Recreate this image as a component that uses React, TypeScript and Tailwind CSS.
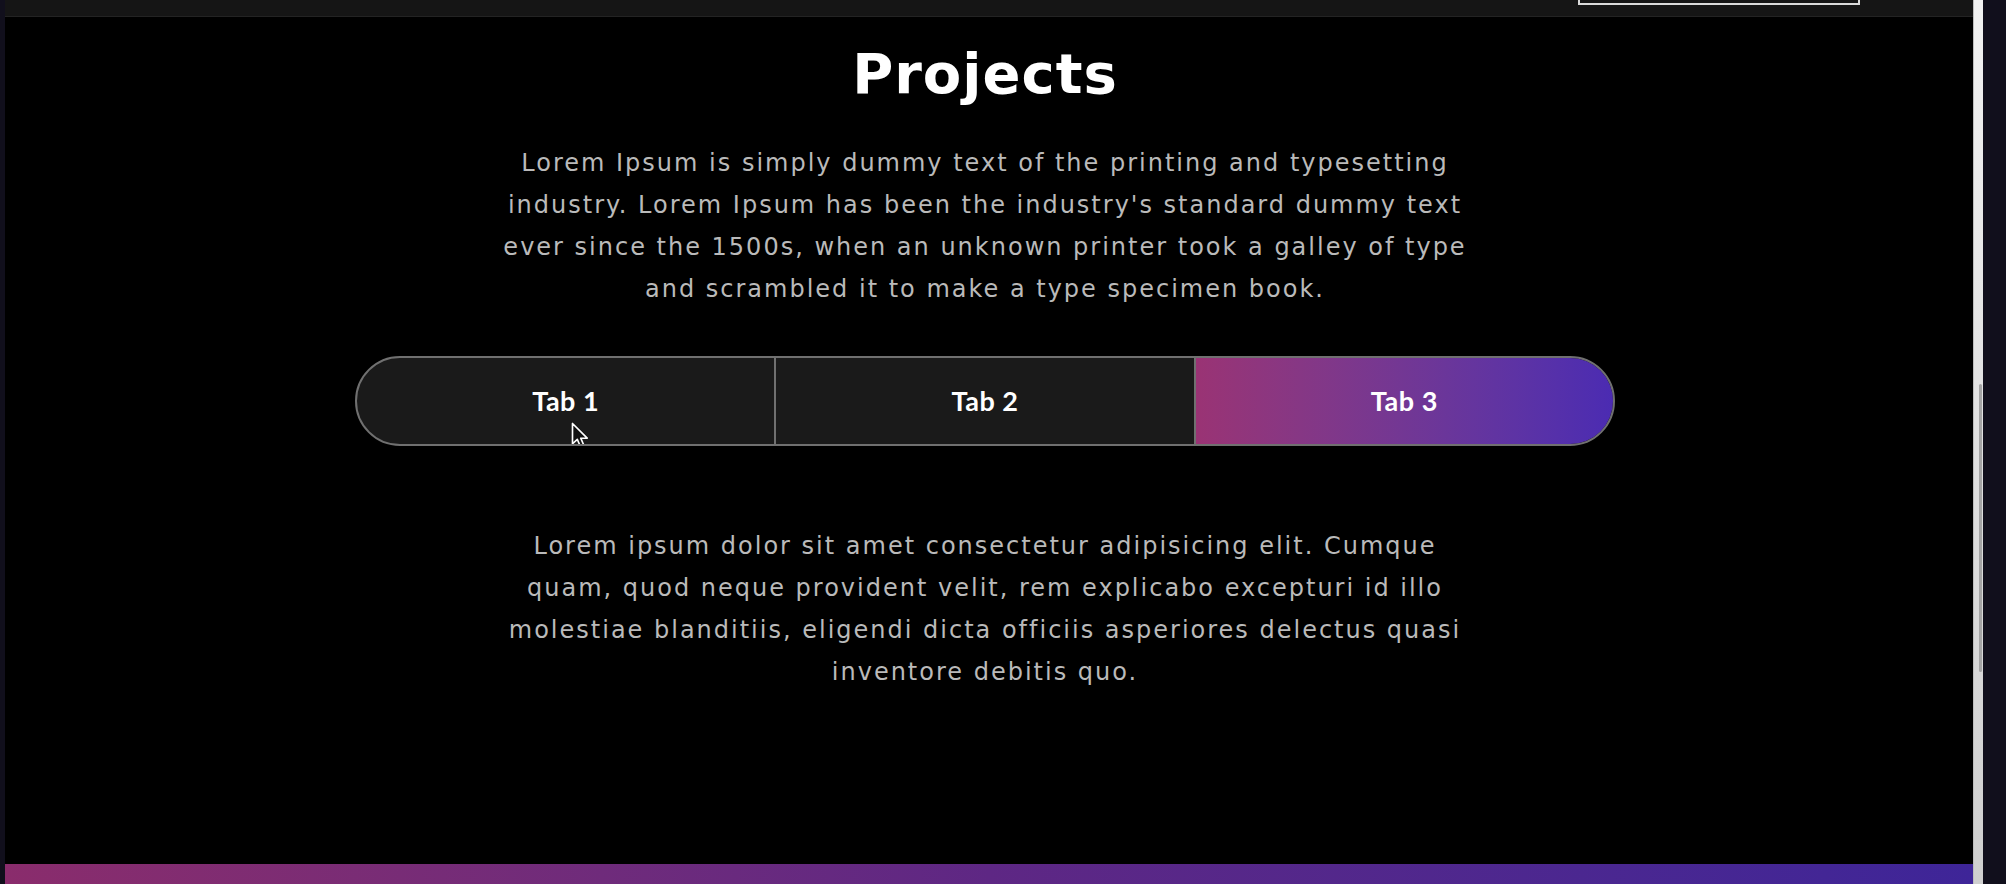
import React from 'react'

const intro = [
  'Lorem Ipsum is simply dummy text of the printing and typesetting',
  "industry. Lorem Ipsum has been the industry's standard dummy text",
  'ever since the 1500s, when an unknown printer took a galley of type',
  'and scrambled it to make a type specimen book.',
]

const body = [
  'Lorem ipsum dolor sit amet consectetur adipisicing elit. Cumque',
  'quam, quod neque provident velit, rem explicabo excepturi id illo',
  'molestiae blanditiis, eligendi dicta officiis asperiores delectus quasi',
  'inventore debitis quo.',
]

const tabs = ['Tab 1', 'Tab 2', 'Tab 3']

function Cursor() {
  return (
    <svg width="18" height="27" viewBox="0 0 12 18" className="absolute left-[214px] top-[64px]">
      <path
        d="M1 1 L1 14.5 L4.2 11.6 L6.4 16.6 L8.6 15.6 L6.5 10.8 L10.8 10.8 Z"
        fill="#111"
        stroke="#fff"
        strokeWidth="1.1"
        strokeLinejoin="round"
      />
    </svg>
  )
}

export default function App() {
  const active = 2

  return (
    <div className="flex w-[2006px] h-[884px] bg-[#110f1c] overflow-hidden" style={{ fontFamily: '"DejaVu Sans", sans-serif' }}>
      {/* left edge */}
      <div className="w-[5px] shrink-0" />

      {/* page */}
      <div className="flex flex-col w-[1968px] shrink-0 bg-black">
        {/* navbar tail */}
        <div className="flex justify-end h-[17px] bg-[#151515] border-b border-[#232323]">
          <div className="w-[282px] h-[5px] mr-[113px] border-x-2 border-b-2 border-[#d9d9d9]" />
        </div>

        <section className="flex flex-col items-center flex-1 pr-[8px]">
          <h2 className="mt-[29px] text-[56px] leading-[56px] font-bold text-white tracking-[1px]">Projects</h2>

          <div className="mt-[40px] flex flex-col items-center text-[24px] leading-[42px] text-[#bababa] tracking-[2px]">
            {intro.map((l) => (
              <span key={l} className="whitespace-nowrap">{l}</span>
            ))}
          </div>

          {/* tabs */}
          <div className="relative mt-[46px] flex w-[1260px] h-[90px] rounded-full border-2 border-[#707070] bg-[#1a1a1a] overflow-hidden">
            {tabs.map((t, i) => (
              <div
                key={t}
                className={`flex-1 flex items-center justify-center text-[27px] font-bold tracking-[0.5px] text-white ${
                  i > 0 ? 'border-l-2 border-[#707070]' : ''
                } ${i === active ? 'bg-gradient-to-r from-[#9a3374] to-[#4b2bb2]' : ''}`}
                style={{ fontFamily: 'Lato, "Liberation Sans", sans-serif' }}
              >
                {t}
              </div>
            ))}
            <Cursor />
          </div>

          <div className="mt-[79px] flex flex-col items-center text-[24px] leading-[42px] text-[#bababa] tracking-[2px]">
            {body.map((l) => (
              <span key={l} className="whitespace-nowrap">{l}</span>
            ))}
          </div>
        </section>

        {/* footer gradient */}
        <div className="h-[20px] bg-gradient-to-r from-[#8a2c6c] via-[#5e2784] to-[#3e2598]" />
      </div>

      {/* scrollbar */}
      <div className="relative w-[10px] shrink-0 bg-gradient-to-b from-[#f2f2f2] to-[#cfcfcf] border-l border-[#bdbdbd]">
        <div className="absolute right-[1px] top-[384px] w-[3px] h-[288px] rounded-full bg-[#a5a5a5]" />
      </div>
      <div className="w-[23px] shrink-0" />
    </div>
  )
}
